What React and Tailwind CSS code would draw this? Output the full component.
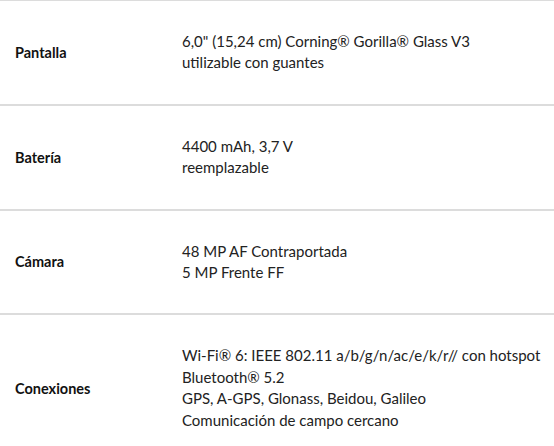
const specs = [
  {
    label: "Pantalla",
    lines: ["6,0\" (15,24 cm) Corning® Gorilla® Glass V3", "utilizable con guantes"],
  },
  {
    label: "Batería",
    lines: ["4400 mAh, 3,7 V", "reemplazable"],
  },
  {
    label: "Cámara",
    lines: ["48 MP AF Contraportada", "5 MP Frente FF"],
  },
  {
    label: "Conexiones",
    lines: [
      "Wi-Fi® 6: IEEE 802.11 a/b/g/n/ac/e/k/r// con hotspot",
      "Bluetooth® 5.2",
      "GPS, A-GPS, Glonass, Beidou, Galileo",
      "Comunicación de campo cercano",
    ],
  },
];

export default function App() {
  return (
    <div className="w-[554px] h-[446px] overflow-hidden bg-white font-['Lato',sans-serif] text-[15px] leading-[21.4px] text-[#222]">
      <div className="border-t border-[#dcdcdc]">
        {specs.map((row) => (
          <div
            key={row.label}
            className="grid grid-cols-[182px_1fr] items-center border-b-2 border-[#dcdcdc] pt-[30px] pb-[30px]"
          >
            <div className="pl-[15px] font-bold text-[14.5px] text-[#111]">{row.label}</div>
            <div>
              {row.lines.map((line) => (
                <div key={line}>{line}</div>
              ))}
            </div>
          </div>
        ))}
      </div>
    </div>
  );
}
